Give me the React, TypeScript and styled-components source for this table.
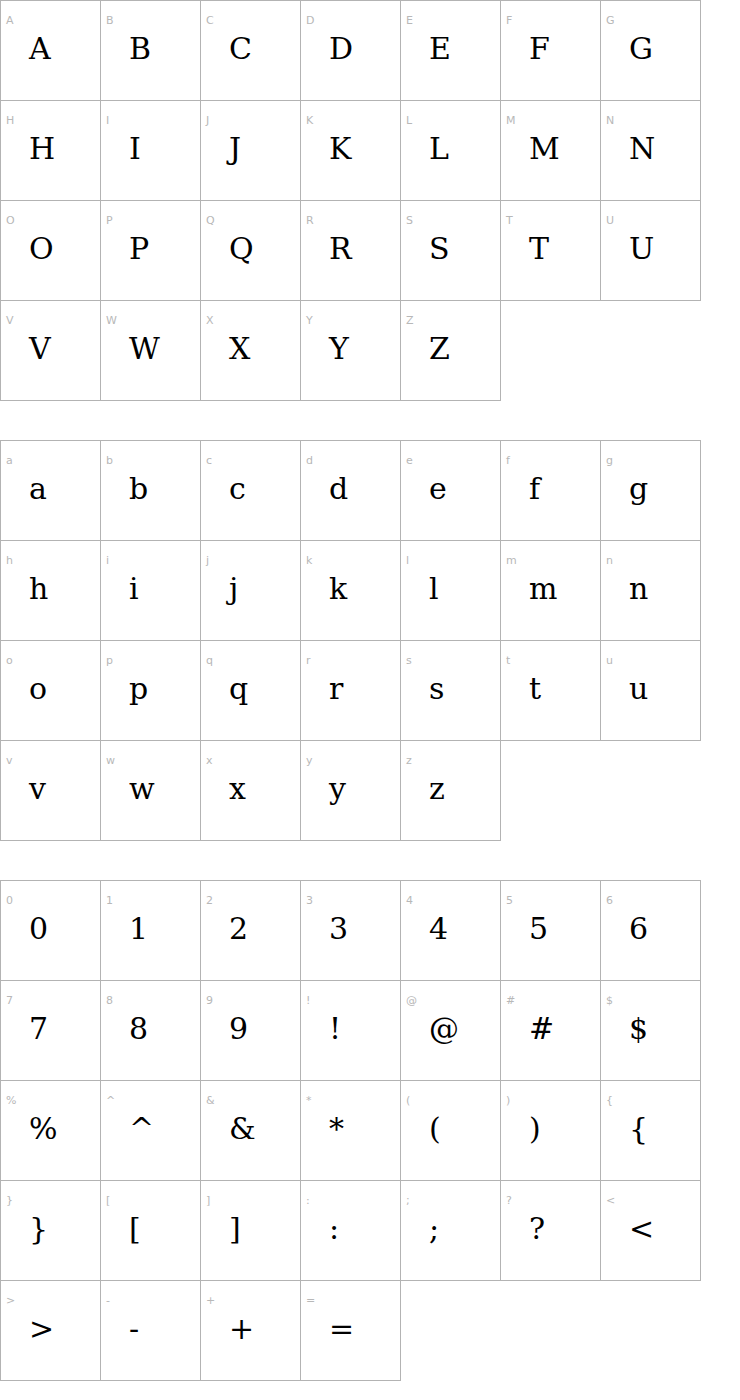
import { createGlobalStyle, styled } from 'styled-components';

const GlobalStyle = createGlobalStyle`
  html, body {
    margin: 0;
    padding: 0;
    background: #fff;
  }
`

const Page = styled.main`
  display: flex;
  flex-direction: column;
  gap: 40px;
  padding-bottom: 20px;
`

const Grid = styled.div`
  display: grid;
  grid-template-columns: repeat(7, 100px);
  grid-auto-rows: 100px;
  width: 701px;
`

const Cell = styled.div`
  box-sizing: border-box;
  width: 101px;
  height: 101px;
  border: 1px solid #b3b3b3;
  display: flex;
  flex-direction: column;
`

const Label = styled.span`
  margin-top: 14px;
  padding-left: 5px;
  font-family: 'DejaVu Sans', sans-serif;
  font-size: 11px;
  line-height: 12px;
  color: #b8b8b8;
`

const Glyph = styled.span`
  margin-top: 7px;
  padding-left: 28px;
  font-family: 'DejaVu Serif', serif;
  font-size: 30px;
  line-height: 30px;
  color: #000;
`

const sections: string[][] = [
  'ABCDEFGHIJKLMNOPQRSTUVWXYZ'.split(''),
  'abcdefghijklmnopqrstuvwxyz'.split(''),
  '0123456789!@#$%^&*(){}[]:;?<>-+='.split(''),
]

export default function App() {
  return (
    <>
      <GlobalStyle />
      <Page>
        {sections.map((chars, i) => (
          <Grid key={i}>
            {chars.map((ch) => (
              <Cell key={ch}>
                <Label>{ch}</Label>
                <Glyph>{ch}</Glyph>
              </Cell>
            ))}
          </Grid>
        ))}
      </Page>
    </>
  )
}
